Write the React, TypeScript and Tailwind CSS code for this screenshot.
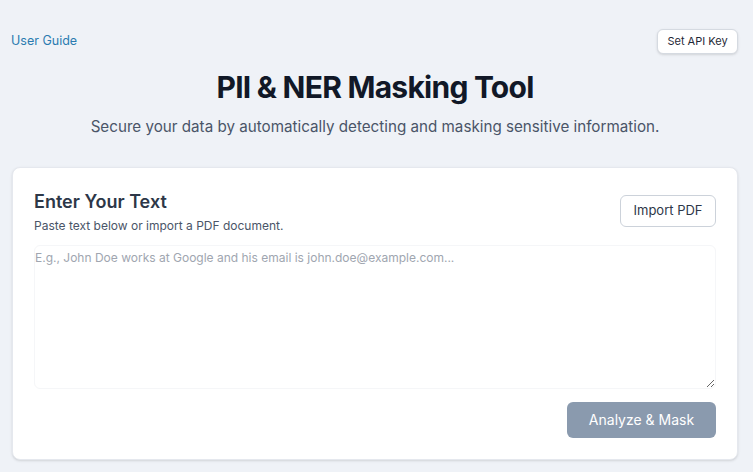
import { useState } from "react";

export default function App() {
  const [text, setText] = useState("");

  return (
    <div
      className="min-h-screen bg-[#eff2f7] pl-3 pr-[15px] pt-[29px] pb-3 text-[#1f2937]"
      style={{ fontFamily: "Inter, 'Noto Sans', sans-serif" }}
    >
      <header className="flex items-center justify-between">
        <a href="#" className="-ml-px text-[12.5px] text-[#2b7bb0]">
          User Guide
        </a>
        <button
          type="button"
          className="h-[25px] w-[81px] rounded-md border border-[#d5dae1] bg-white text-[11px] text-[#1f2937] shadow-sm"
        >
          Set API Key
        </button>
      </header>

      <div className="mt-[14px] text-center">
        <h1 className="text-[30px] font-bold leading-[38px] tracking-tight text-[#111827]">
          PII &amp; NER Masking Tool
        </h1>
        <p className="mt-[11px] text-[15.2px] leading-5 text-[#4a5568]">
          Secure your data by automatically detecting and masking sensitive information.
        </p>
      </div>

      <section className="mt-[30px] rounded-lg border border-[#e5e8ee] bg-white px-[21px] pt-[22px] pb-[21px] shadow-sm">
        <div className="flex items-start justify-between">
          <div>
            <h2 className="text-lg font-semibold leading-6 text-[#2d3748]">Enter Your Text</h2>
            <p className="mt-[4px] text-xs text-[#4a5568]">Paste text below or import a PDF document.</p>
          </div>
          <button
            type="button"
            className="mt-[5px] h-[32px] w-[96px] rounded-md border border-[#ccd2da] bg-white text-[13px] text-[#2d3748]"
          >
            Import PDF
          </button>
        </div>

        <textarea
          value={text}
          onChange={(e) => setText(e.target.value)}
          placeholder="E.g., John Doe works at Google and his email is john.doe@example.com..."
          className="mt-[11px] block h-[144px] w-full resize-y rounded-md border border-[#f5f6f8] px-0 py-[4px] text-xs text-[#1f2937] outline-none placeholder:text-[#a0a6b0]"
        />

        <div className="mt-[13px] flex justify-end">
          <button
            type="button"
            disabled
            className="h-[36px] w-[149px] rounded-md bg-[#8a9aae] text-sm text-white"
          >
            Analyze &amp; Mask
          </button>
        </div>
      </section>
    </div>
  );
}
